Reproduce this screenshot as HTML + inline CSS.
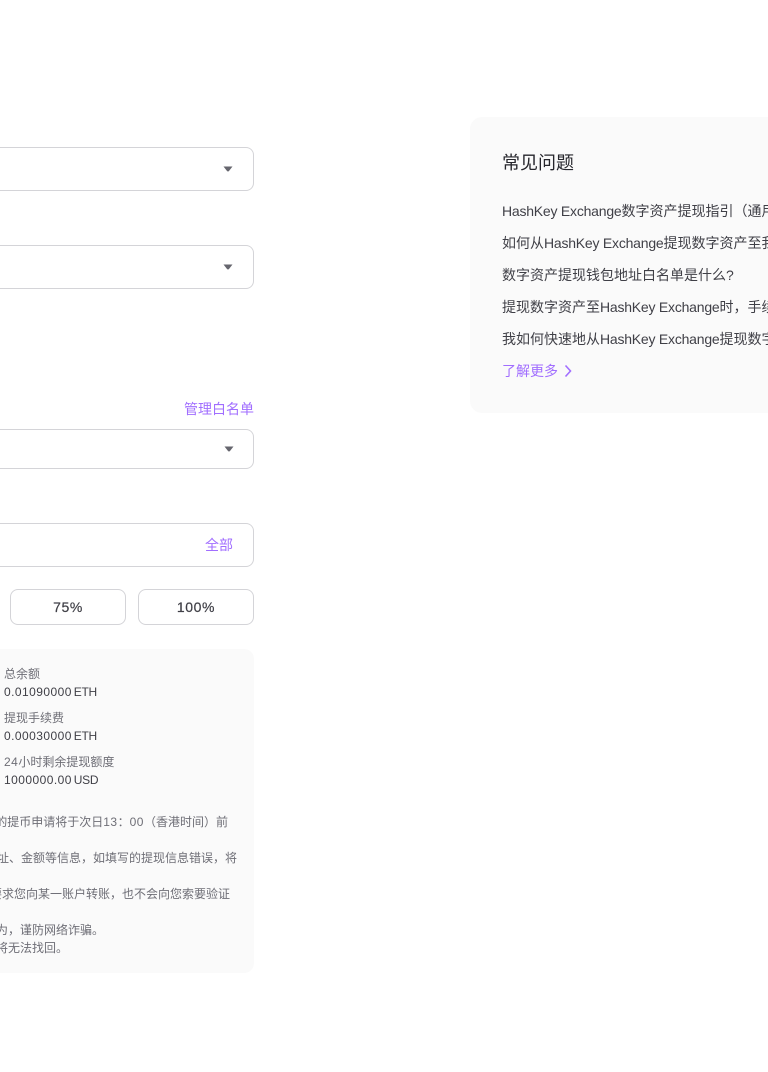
<!DOCTYPE html>
<html lang="zh-CN">
<head>
<meta charset="utf-8">
<style>
html,body{margin:0;padding:0;background:#fff;width:768px;height:1072px;overflow:hidden}
body{position:relative;font-family:"Liberation Sans","Noto Sans CJK SC",sans-serif;color:#3a3a42}
.a{position:absolute;white-space:nowrap}
.box{position:absolute;box-sizing:border-box;border:1px solid #d4d4d8;border-radius:8px;background:#fff}
.sel{left:0;width:254px;border-left:0;border-top-left-radius:0;border-bottom-left-radius:0}
.caret{position:absolute;left:223px;width:10px;height:6px}
.pur{color:#a16eff}
.clip{position:absolute;overflow:hidden}
.t{font-size:14px;line-height:20px;color:#3f3f46}
.t b{font-weight:400;letter-spacing:-.22px}
.g{font-size:12px;line-height:18px;color:#6e6e76}
.g b{font-weight:400;letter-spacing:.5px}
.d{font-size:12px;line-height:18px;color:#3f3f46;left:4px;letter-spacing:-.3px}
.d b{font-weight:400;letter-spacing:.45px;margin-right:-1.2px}
.n{font-size:12px;line-height:18px;color:#6e6e76}
.n b{font-weight:400;letter-spacing:.5px}
.btn{top:589px;height:36px;width:116px;text-align:center;font-size:14px;line-height:35px;color:#3f3f46;letter-spacing:.6px;-webkit-text-stroke:.2px #3f3f46}
</style>
</head>
<body>
<div class="box sel" style="top:147px;height:44px"></div>
<svg class="caret" style="top:166px" viewBox="0 0 10 6"><path d="M0.5 0.5H9.5L6 5Q5 6 4 5Z" fill="#66666e"/></svg>
<div class="box sel" style="top:245px;height:44px"></div>
<svg class="caret" style="top:264px" viewBox="0 0 10 6"><path d="M0.5 0.5H9.5L6 5Q5 6 4 5Z" fill="#66666e"/></svg>

<div class="a pur" style="left:184px;top:399px;font-size:14px;line-height:20px">管理白名单</div>
<div class="box sel" style="top:429px;height:40px"></div>
<svg class="caret" style="top:446px;left:224px" viewBox="0 0 10 6"><path d="M0.5 0.5H9.5L6 5Q5 6 4 5Z" fill="#66666e"/></svg>

<div class="box sel" style="top:523px;height:44px"></div>
<div class="a pur" style="left:205px;top:535px;font-size:14px;line-height:20px">全部</div>

<div class="box btn" style="left:10px">75%</div>
<div class="box btn" style="left:138px">100%</div>

<div class="a" style="left:0;top:649px;width:254px;height:324px;background:#fafafa;border-radius:0 10px 10px 0"></div>
<div class="a g" style="left:4px;top:665px">总余额</div>
<div class="a d" style="top:683px"><b>0.01090000</b> ETH</div>
<div class="a g" style="left:4px;top:709px">提现手续费</div>
<div class="a d" style="top:727px"><b>0.00030000</b> ETH</div>
<div class="a g" style="left:4px;top:753px"><b>24</b>小时剩余提现额度</div>
<div class="a d" style="top:771px"><b>1000000.00</b> USD</div>

<div class="clip" style="left:0;top:813px;width:254px;height:18px"><div class="a n" style="right:26px;top:0">的提币申请将于次日<b>13</b>：<b>00</b>（香港时间）前</div></div>
<div class="clip" style="left:0;top:849px;width:254px;height:18px"><div class="a n" style="right:17px;top:0">址、金额等信息，如填写的提现信息错误，将</div></div>
<div class="clip" style="left:0;top:885px;width:254px;height:18px"><div class="a n" style="right:24px;top:0">要求您向某一账户转账，也不会向您索要验证</div></div>
<div class="clip" style="left:0;top:921px;width:254px;height:18px"><div class="a n" style="right:150px;top:0">为，谨防网络诈骗。</div></div>
<div class="clip" style="left:0;top:939px;width:254px;height:18px"><div class="a n" style="right:186px;top:0">将无法找回。</div></div>

<div class="a" style="left:470px;top:117px;width:298px;height:296px;background:#fafafa;border-radius:12px 0 0 12px"></div>
<div class="a" style="left:502px;top:151px;font-size:18px;line-height:25px;color:#26262c">常见问题</div>
<div class="clip" style="left:502px;top:201px;width:266px;height:20px"><div class="a t" style="left:0;top:0"><b>HashKey Exchange</b>数字资产提现指引（通用）</div></div>
<div class="clip" style="left:502px;top:233px;width:266px;height:20px"><div class="a t" style="left:0;top:0">如何从<b>HashKey Exchange</b>提现数字资产至我的钱包</div></div>
<div class="a t" style="left:502px;top:265px">数字资产提现钱包地址白名单是什么?</div>
<div class="clip" style="left:502px;top:297px;width:266px;height:20px"><div class="a t" style="left:0;top:0">提现数字资产至<b>HashKey Exchange</b>时，手续费</div></div>
<div class="clip" style="left:502px;top:329px;width:266px;height:20px"><div class="a t" style="left:0;top:0">我如何快速地从<b>HashKey Exchange</b>提现数字资产</div></div>
<div class="a pur" style="left:502px;top:361px;font-size:14px;line-height:20px">了解更多</div>
<svg class="a" style="left:563px;top:364px" width="10" height="14" viewBox="0 0 10 14"><path d="M2.5 1.5L7.5 7L2.5 12.5" fill="none" stroke="#a16eff" stroke-width="1.6"/></svg>
</body>
</html>
